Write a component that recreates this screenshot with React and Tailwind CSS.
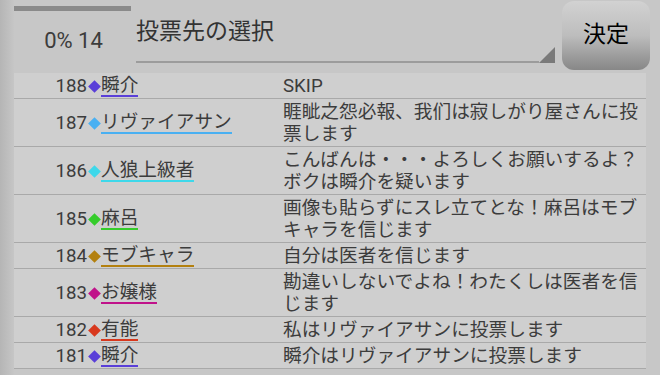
const rows = [
  { no: 188, name: "瞬介", color: "#5a3fd8", lines: ["SKIP"] },
  { no: 187, name: "リヴァイアサン", color: "#49b0f2", lines: ["睚眦之怨必報、我们は寂しがり屋さんに投", "票します"] },
  { no: 186, name: "人狼上級者", color: "#3ed8ea", lines: ["こんばんは・・・よろしくお願いするよ？", "ボクは瞬介を疑います"] },
  { no: 185, name: "麻呂", color: "#35cc2b", lines: ["画像も貼らずにスレ立てとな！麻呂はモブ", "キャラを信じます"] },
  { no: 184, name: "モブキャラ", color: "#b3800f", lines: ["自分は医者を信じます"] },
  { no: 183, name: "お嬢様", color: "#c0128a", lines: ["勘違いしないでよね！わたくしは医者を信", "じます"] },
  { no: 182, name: "有能", color: "#d8381d", lines: ["私はリヴァイアサンに投票します"] },
  { no: 181, name: "瞬介", color: "#5a3fd8", lines: ["瞬介はリヴァイアサンに投票します"] },
];

const Row = ({ row }) => (
  <div className="flex border-b border-[#a9a9a9] pt-[2px] pb-[1px]">
    <div className="w-[269px] pl-[41px] flex items-center">
      <span className="w-[32px] text-right leading-[20px]">{row.no}</span>
      <span className="w-[14px] flex justify-center">
        <span
          className="block w-[9px] h-[9px] rotate-45"
          style={{ backgroundColor: row.color }}
        />
      </span>
      <span
        className="block leading-[20px] border-b-2"
        style={{ borderColor: row.color }}
      >
        {row.name}
      </span>
    </div>
    <div className="flex-1 leading-[22px] whitespace-nowrap">
      {row.lines.map((l, i) => (
        <div key={i}>{l}</div>
      ))}
    </div>
  </div>
);

export default function App() {
  return (
    <div className="w-[660px] h-[375px] overflow-hidden bg-[#c7c7c7] text-[#3c3c3c] font-['Roboto','Noto_Sans_CJK_JP',sans-serif] flex">
      {/* left shade */}
      <div className="w-[14px] bg-gradient-to-r from-[#b5b5b5] to-[#c6c6c6]" />
      <div className="flex-1 flex flex-col">
        {/* header */}
        <div className="h-[73px] flex">
          <div className="w-[117px] flex flex-col">
            <div className="mt-[6px] h-[5px] bg-[#8a8a8a]" />
            <div className="mt-[16px] text-[22px] leading-[28px] text-center pl-[2px]">0% 14</div>
          </div>
          <div className="w-[419px] ml-[5px] flex flex-col">
            <div className="mt-[17px] text-[23px] leading-[30px] text-[#333]">投票先の選択</div>
            <div className="mt-auto mb-[11px] flex items-end">
              <div className="flex-1 h-[2px] bg-[#9c9c9c]" />
              <svg width="16" height="16" viewBox="0 0 16 16" className="block">
                <polygon points="16,0 16,16 0,16" fill="#7a7a7a" />
              </svg>
            </div>
          </div>
          <div className="ml-[7px] mt-[1px] w-[88px] h-[69px] rounded-[12px] bg-gradient-to-b from-[#d2d2d2] via-[#bdbdbd] to-[#878787] flex items-center justify-center text-[23px] text-black">
            決定
          </div>
        </div>
        {/* table */}
        <div className="w-[632px] bg-[#cfcfcf] text-[18.7px]">
          {rows.map((r, i) => (
            <Row key={i} row={r} />
          ))}
        </div>
      </div>
    </div>
  );
}
